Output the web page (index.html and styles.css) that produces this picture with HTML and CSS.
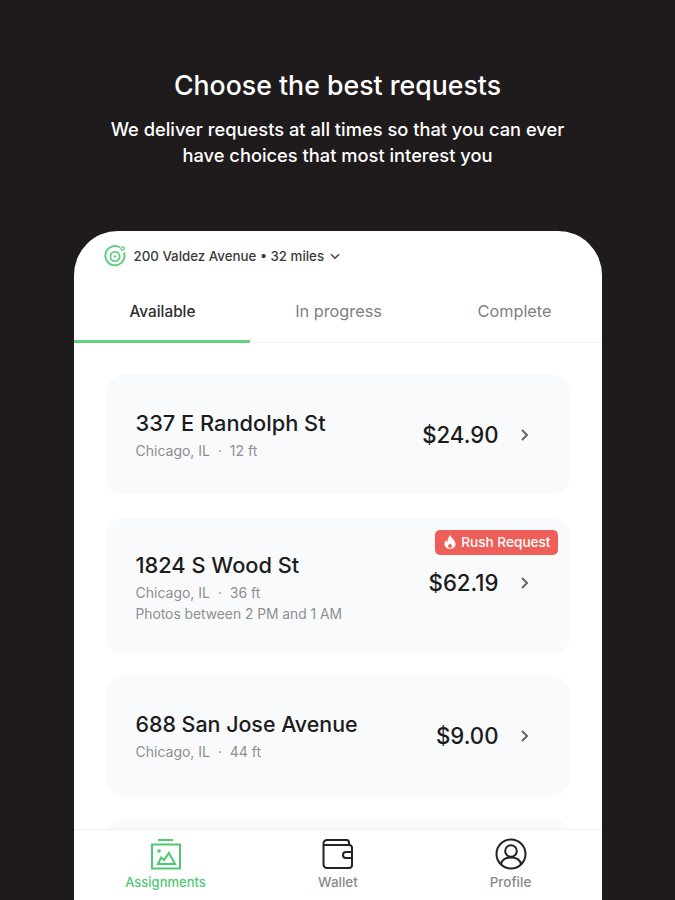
FILE: index.html
```html
<!DOCTYPE html>
<html lang="en">
<head>
<meta charset="UTF-8">
<meta name="viewport" content="width=device-width, initial-scale=1.0">
<title>Choose the best requests</title>
<link rel="stylesheet" href="styles.css">
</head>
<body>
<div class="intro">
  <h1>Choose the best requests</h1>
  <p>We deliver requests at all times so that you can ever<br>have choices that most interest you</p>
</div>

<div class="phone">
  <div class="location">
    <svg class="location-icon" width="24" height="24" viewBox="0 0 24 24" fill="none" stroke="#5fcf80">
      <path d="M16.800 3.400A9.600 9.600 0 1 0 21 8.500" stroke-width="2"/>
      <circle cx="12" cy="12.500" r="4.600" stroke-width="1.800"/>
      <circle cx="12" cy="12.500" r="1.200" fill="#5fcf80" stroke="none"/>
      <circle cx="19.600" cy="4.600" r="1.700" stroke-width="1.300"/>
    </svg>
    <span>200 Valdez Avenue • 32 miles</span>
    <svg class="location-arrow" width="10" height="7" viewBox="0 0 10 7" fill="none" stroke="#444" stroke-width="1.500"><path d="M1 1.200l4 4 4-4"/></svg>
  </div>

  <div class="tabs">
    <div class="tab tab-active">Available</div>
    <div class="tab">In progress</div>
    <div class="tab">Complete</div>
  </div>

  <div class="list">
    <div class="request">
      <div class="request-info">
        <div class="street">337 E Randolph St</div>
        <div class="meta">Chicago, IL &nbsp;·&nbsp; 12 ft</div>
      </div>
      <div class="price">$24.90</div>
      <svg class="chevron" width="10" height="14" viewBox="0 0 10 14" fill="none" stroke="#666" stroke-width="2"><path d="M2 2l5 5-5 5"/></svg>
    </div>

    <div class="request request-rush">
      <div class="rush-badge">
        <svg width="12" height="14" viewBox="0 0 13 15" fill="#fff"><path d="M6.800 0c.5 2.300 2 3.300 3.500 5 1.300 1.500 2.200 3 2.200 4.800C12.500 12.800 10 15 6.500 15S.5 12.800.5 9.800c0-1.800.9-3.300 2-4.500.2 1 .7 1.700 1.500 2.100C3.800 4.500 5 1.800 6.800 0zM6.500 9c-1 1-2 1.900-2 3.200 0 1 .9 1.800 2 1.800s2-.8 2-1.800C8.500 10.900 7.500 10 6.500 9z"/></svg>
        Rush Request
      </div>
      <div class="request-info">
        <div class="street">1824 S Wood St</div>
        <div class="meta">Chicago, IL &nbsp;·&nbsp; 36 ft</div>
        <div class="meta meta-extra">Photos between 2 PM and 1 AM</div>
      </div>
      <div class="price">$62.19</div>
      <svg class="chevron" width="10" height="14" viewBox="0 0 10 14" fill="none" stroke="#666" stroke-width="2"><path d="M2 2l5 5-5 5"/></svg>
    </div>

    <div class="request">
      <div class="request-info">
        <div class="street street-long">688 San Jose Avenue</div>
        <div class="meta">Chicago, IL &nbsp;·&nbsp; 44 ft</div>
      </div>
      <div class="price">$9.00</div>
      <svg class="chevron" width="10" height="14" viewBox="0 0 10 14" fill="none" stroke="#666" stroke-width="2"><path d="M2 2l5 5-5 5"/></svg>
    </div>

    <div class="request"></div>
  </div>

  <div class="nav">
    <div class="nav-item nav-active">
      <svg width="32" height="32" viewBox="0 0 32 32" fill="none" stroke="#4fc873" stroke-width="2">
        <path d="M8 2h15"/>
        <rect x="2" y="6.500" width="28" height="24"/>
        <circle cx="9" cy="13" r="1.800" fill="#4fc873" stroke="none"/>
        <path d="M8 26h17l-6-11-5 7-3-2.500z"/>
      </svg>
      <span>Assignments</span>
    </div>
    <div class="nav-item">
      <svg width="32" height="32" viewBox="0 0 32 32" fill="none" stroke="#222" stroke-width="2">
        <path d="M27 7V4.500A2.500 2.500 0 0 0 24.500 2H5a3.500 3.500 0 0 0-3.500 3.500v21A3.500 3.500 0 0 0 5 30h22a3 3 0 0 0 3-3V10a3 3 0 0 0-3-3H2.500"/>
        <path d="M30 14h-6a3 3 0 0 0 0 6h6"/>
      </svg>
      <span>Wallet</span>
    </div>
    <div class="nav-item">
      <svg width="32" height="32" viewBox="0 0 32 32" fill="none" stroke="#222" stroke-width="2">
        <circle cx="16" cy="16" r="14.500"/>
        <circle cx="16" cy="13" r="5.800"/>
        <path d="M6 26c1-4 5-6.500 10-6.500S25 22 26 26"/>
      </svg>
      <span>Profile</span>
    </div>
  </div>
</div>
</body>
</html>
```

FILE: styles.css
```css
html, body {
  height: 100%;
}
body {
  margin: 0;
  height: 900px;
  overflow: hidden;
  background-color: #1f1b1c;
  font-family: "Inter", "Liberation Sans", sans-serif;
  display: flex;
  flex-direction: column;
  align-items: center;
}
.intro {
  height: 231px;
  padding-top: 67px;
  box-sizing: border-box;
  text-align: center;
  color: #fff;
  flex-shrink: 0;
}
.intro h1 {
  margin: 0;
  font-size: 26.700px;
  line-height: 36px;
  font-weight: 500;
}
.intro p {
  margin: 13px 0 0;
  font-size: 18.300px;
  line-height: 26px;
  font-weight: 500;
}
.phone {
  width: 528px;
  height: 669px;
  flex-shrink: 0;
  background-color: #fff;
  border-radius: 44px 44px 0 0;
  display: flex;
  flex-direction: column;
  overflow: hidden;
}
.location {
  display: flex;
  align-items: center;
  height: 50px;
  padding: 0 0 0 29px;
  box-sizing: border-box;
  font-size: 13.300px;
  font-weight: 500;
  color: #3b3b3b;
}
.location-icon {
  margin: 0 7px 0 0;
}
.location-arrow {
  margin-left: 6px;
}
.tabs {
  display: flex;
  height: 62px;
  border-bottom: 1px solid #eff1f2;
  box-sizing: border-box;
}
.tab {
  flex: 1;
  display: flex;
  align-items: center;
  justify-content: center;
  font-size: 16.300px;
  color: #808080;
  padding: 0 0 2px 2px;
  box-sizing: border-box;
}
.tab-active {
  color: #2c2c2c;
  font-size: 15.300px;
  font-weight: 500;
  border-bottom: 3px solid #62d27f;
  margin-bottom: -1px;
  height: 62px;
  padding: 2px 0 0 2px;
}
.list {
  flex: 1;
  min-height: 0;
  overflow: hidden;
  padding: 32px 32px 0;
  display: flex;
  flex-direction: column;
  gap: 22.500px;
}
.request {
  background-color: #f9fafb;
  border-radius: 18px;
  height: 120px;
  flex-shrink: 0;
  display: flex;
  align-items: center;
  padding: 0 40px 0 30px;
  box-sizing: border-box;
  position: relative;
}
.request-rush {
  height: 136px;
}
.request-info {
  flex: 1;
  margin-top: -2px;
}
.request-rush .request-info {
  margin-top: 2px;
}
.price {
  font-size: 22.200px;
  font-weight: 500;
  color: #1c1c1c;
  margin-top: -1px;
}
.request-rush .price,
.request-rush .chevron {
  margin-top: -6px;
}
.street {
  font-size: 21.800px;
  line-height: 30px;
  font-weight: 500;
  color: #1c1c1c;
}
.street-long {
  font-size: 21.400px;
}
.meta {
  font-size: 14px;
  line-height: 20px;
  color: #8d8f91;
  margin-top: 3px;
}
.meta-extra {
  margin-top: 1px;
  font-size: 13.800px;
}
.chevron {
  margin-left: 21px;
}
.rush-badge {
  position: absolute;
  top: 12px;
  right: 12px;
  height: 25px;
  padding: 0 7px 0 9px;
  display: flex;
  align-items: center;
  gap: 5px;
  background-color: #ef5f59;
  border-radius: 5px;
  font-size: 13.600px;
  font-weight: 500;
  color: #fff;
}
.nav {
  height: 71px;
  flex-shrink: 0;
  display: flex;
  justify-content: space-between;
  padding: 0 49px 0 50px;
  background-color: #fff;
  border-top: 1px solid #f1f2f3;
  box-sizing: border-box;
}
.nav-item {
  width: 84px;
  display: flex;
  flex-direction: column;
  align-items: center;
  padding-top: 8px;
  font-size: 13.500px;
  line-height: 16px;
  font-weight: 500;
  color: #8a8a8a;
}
.nav-item span {
  margin-top: 4px;
}
.nav-active {
  color: #4fc873;
  font-size: 13px;
}
```
